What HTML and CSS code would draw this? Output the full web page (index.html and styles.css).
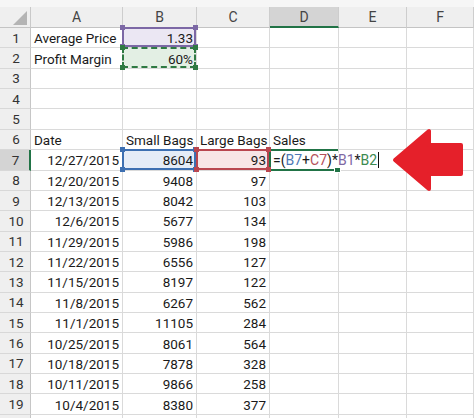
FILE: index.html
```html
<!DOCTYPE html>
<html lang="en">
<head>
    <meta charset="UTF-8">
    <meta name="viewport" content="width=device-width, initial-scale=1.0">
    <title>Sales Formula</title>
    <link rel="stylesheet" href="styles.css">
</head>
<body>
    <div class="sheet">
        <div class="strip"></div>

        <div class="corner"><div class="tri"></div></div>
        <div class="ch">A</div>
        <div class="ch">B</div>
        <div class="ch">C</div>
        <div class="ch active">D</div>
        <div class="ch">E</div>
        <div class="ch">F</div>

        <div class="rh">1</div><div class="c">Average Price</div><div class="c num ref purple">1.33</div><div class="c"></div><div class="c"></div><div class="c"></div><div class="c"></div>
        <div class="rh">2</div><div class="c">Profit Margin</div><div class="c num ref green">60%</div><div class="c"></div><div class="c"></div><div class="c"></div><div class="c"></div>
        <div class="rh">3</div><div class="c"></div><div class="c"></div><div class="c"></div><div class="c"></div><div class="c"></div><div class="c"></div>
        <div class="rh">4</div><div class="c"></div><div class="c"></div><div class="c"></div><div class="c"></div><div class="c"></div><div class="c"></div>
        <div class="rh">5</div><div class="c"></div><div class="c"></div><div class="c"></div><div class="c"></div><div class="c"></div><div class="c"></div>
        <div class="rh">6</div><div class="c">Date</div><div class="c">Small Bags</div><div class="c">Large Bags</div><div class="c">Sales</div><div class="c"></div><div class="c"></div>
        <div class="rh active">7</div><div class="c num">12/27/2015</div><div class="c num ref blue">8604</div><div class="c num ref red">93</div>
        <div class="c editing"><span class="formula">=(<span class="f-blue">B7</span>+<span class="f-red">C7</span>)*<span class="f-purple">B1</span>*<span class="f-green">B2</span><span class="caret"></span></span></div>
        <div class="c"></div><div class="c"></div>
        <div class="rh">8</div><div class="c num">12/20/2015</div><div class="c num">9408</div><div class="c num">97</div><div class="c"></div><div class="c"></div><div class="c"></div>
        <div class="rh">9</div><div class="c num">12/13/2015</div><div class="c num">8042</div><div class="c num">103</div><div class="c"></div><div class="c"></div><div class="c"></div>
        <div class="rh">10</div><div class="c num">12/6/2015</div><div class="c num">5677</div><div class="c num">134</div><div class="c"></div><div class="c"></div><div class="c"></div>
        <div class="rh">11</div><div class="c num">11/29/2015</div><div class="c num">5986</div><div class="c num">198</div><div class="c"></div><div class="c"></div><div class="c"></div>
        <div class="rh">12</div><div class="c num">11/22/2015</div><div class="c num">6556</div><div class="c num">127</div><div class="c"></div><div class="c"></div><div class="c"></div>
        <div class="rh">13</div><div class="c num">11/15/2015</div><div class="c num">8197</div><div class="c num">122</div><div class="c"></div><div class="c"></div><div class="c"></div>
        <div class="rh">14</div><div class="c num">11/8/2015</div><div class="c num">6267</div><div class="c num">562</div><div class="c"></div><div class="c"></div><div class="c"></div>
        <div class="rh">15</div><div class="c num">11/1/2015</div><div class="c num">11105</div><div class="c num">284</div><div class="c"></div><div class="c"></div><div class="c"></div>
        <div class="rh">16</div><div class="c num">10/25/2015</div><div class="c num">8061</div><div class="c num">564</div><div class="c"></div><div class="c"></div><div class="c"></div>
        <div class="rh">17</div><div class="c num">10/18/2015</div><div class="c num">7878</div><div class="c num">328</div><div class="c"></div><div class="c"></div><div class="c"></div>
        <div class="rh">18</div><div class="c num">10/11/2015</div><div class="c num">9866</div><div class="c num">258</div><div class="c"></div><div class="c"></div><div class="c"></div>
        <div class="rh">19</div><div class="c num">10/4/2015</div><div class="c num">8380</div><div class="c num">377</div><div class="c"></div><div class="c"></div><div class="c"></div>
        <!-- next row only peeks in at the bottom edge -->
        <div class="rh"></div><div class="c"></div><div class="c"></div><div class="c"></div><div class="c"></div><div class="c"></div><div class="c"></div>
    </div>

    <!-- callout arrow pointing at the formula -->
    <svg class="arrow" width="80" height="72" viewBox="388 124 80 72">
        <path d="M395 160 L429 131 L429 145 L461 145 L461 174 L429 174 L429 189 Z"
              fill="#e5202a" stroke="#e5202a" stroke-width="4" stroke-linejoin="round"/>
    </svg>
</body>
</html>
```

FILE: styles.css
```css
body {
    margin: 0;
    background-color: #fff;
    font-family: Roboto, "Liberation Sans", sans-serif;
    font-size: 13.5px;
    color: #1a1a1a;
    overflow: hidden;
}

.sheet {
    display: grid;
    grid-template-columns: 31px 92px 74px 73px 69px 68px 67px;
    grid-template-rows: 7px 21px repeat(20, 20.37px);
}

.strip {
    grid-column: 1 / -1;
    background-color: #f6f6f6;
}

.corner {
    background-color: #efefef;
    border-right: 1px solid #c9c9c9;
    border-bottom: 1px solid #c4c4c4;
    box-sizing: border-box;
    display: flex;
    justify-content: flex-end;
    align-items: flex-end;
    padding: 0 3px 2px 0;
}

.tri {
    width: 14px;
    height: 14px;
    background-color: #b4b4b4;
    clip-path: polygon(100% 0, 100% 100%, 0 100%);
}

.ch {
    background-color: #efefef;
    border-right: 1px solid #cdcdcd;
    border-bottom: 1px solid #c4c4c4;
    box-sizing: border-box;
    display: flex;
    justify-content: center;
    align-items: center;
    color: #444;
    font-size: 14px;
}

.ch.active {
    background-color: #d4d4d4;
    border-bottom: 2px solid #217346;
}

.rh {
    background-color: #efefef;
    border-right: 1px solid #c6c6c6;
    border-bottom: 1px solid #d8d8d8;
    box-sizing: border-box;
    display: flex;
    justify-content: center;
    align-items: center;
    padding-left: 2px;
    color: #333;
}

.rh.active {
    background-color: #d4d4d4;
    border-right: 2px solid #217346;
}

.c {
    border-right: 1px solid #dadada;
    border-bottom: 1px solid #dadada;
    box-sizing: border-box;
    display: flex;
    align-items: center;
    padding: 1px 3px 0 3px;
    white-space: nowrap;
}

.num {
    justify-content: flex-end;
}

/* highlighted formula references */
.ref {
    position: relative;
}

.ref::before {
    content: "";
    position: absolute;
    top: -1px;
    left: -1px;
    right: 0;
    bottom: 0;
    border: 2px solid var(--ref);
    pointer-events: none;
}

.ref::after {
    content: "";
    position: absolute;
    top: -3px;
    left: -3px;
    right: -2px;
    bottom: -2px;
    background:
        linear-gradient(var(--ref), var(--ref)) left top / 5px 5px no-repeat,
        linear-gradient(var(--ref), var(--ref)) right top / 5px 5px no-repeat,
        linear-gradient(var(--ref), var(--ref)) left bottom / 5px 5px no-repeat,
        linear-gradient(var(--ref), var(--ref)) right bottom / 5px 5px no-repeat;
    pointer-events: none;
    z-index: 2;
}

.purple {
    --ref: #7c68a5;
    background-color: #ebe7f3;
}

.green {
    --ref: #2f7a43;
    background-color: #e3efe4;
}

.green::before {
    border-style: dashed;
}

.blue {
    --ref: #3d6fb1;
    background-color: #e5ecf7;
}

.red {
    --ref: #b9464f;
    background-color: #f8e5e6;
}

/* cell being edited */
.editing {
    position: relative;
    overflow: visible;
    padding-left: 2px;
}

.editing::before {
    content: "";
    position: absolute;
    top: -1px;
    left: -1px;
    right: 0;
    bottom: -1px;
    border: 2px solid #217346;
    border-right: none;
    pointer-events: none;
}

.editing::after {
    content: "";
    position: absolute;
    right: -3px;
    bottom: -3px;
    width: 5px;
    height: 5px;
    background-color: #217346;
    border: 1px solid #fff;
}

.formula {
    position: relative;
    z-index: 1;
    background-color: #fff;
    padding: 0 3px 0 1px;
    display: flex;
    align-items: center;
    height: 15px;
    font-size: 14px;
}

.f-blue { color: #4e78b5; }
.f-red { color: #b5505a; }
.f-purple { color: #7e68a3; }
.f-green { color: #3c8a4f; }

.caret {
    width: 1px;
    height: 16px;
    margin-left: 1px;
    background-color: #111;
}

.arrow {
    position: absolute;
    left: 388px;
    top: 124px;
}
```
